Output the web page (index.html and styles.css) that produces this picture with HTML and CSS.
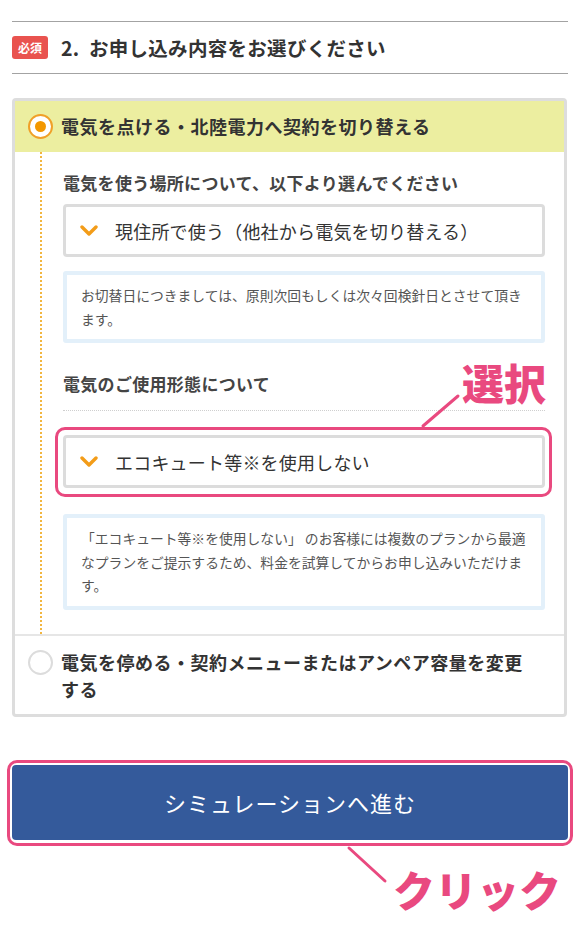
FILE: index.html
```html
<!DOCTYPE html>
<html lang="ja">
<head>
<meta charset="utf-8">
<title>お申し込み内容</title>
<link rel="stylesheet" href="styles.css">
</head>
<body>
<div class="page">
  <div class="sec-head">
    <span class="badge">必須</span>
    <h2 class="sec-title">2.&nbsp; お申し込み内容をお選びください</h2>
  </div>

  <div class="choice-box">
    <div class="opt opt-active">
      <span class="radio radio-on"><span class="radio-dot"></span></span>
      <span class="opt-label">電気を点ける・北陸電力へ契約を切り替える</span>
    </div>
    <div class="opt-body">
      <p class="field-label">電気を使う場所について、以下より選んでください</p>
      <div class="select">
        <svg class="chev" width="18" height="11" viewBox="0 0 18 11"><polyline points="2,2 9,9 16,2" fill="none" stroke="#f39c18" stroke-width="3.4" stroke-linecap="round" stroke-linejoin="round"/></svg>
        <span class="select-text">現住所で使う（他社から電気を切り替える）</span>
      </div>
      <div class="note">お切替日につきましては、原則次回もしくは次々回検針日とさせて頂きます。</div>

      <p class="field-label field-label-sep">電気のご使用形態について</p>
      <div class="highlight">
        <div class="select">
          <svg class="chev" width="18" height="11" viewBox="0 0 18 11"><polyline points="2,2 9,9 16,2" fill="none" stroke="#f39c18" stroke-width="3.4" stroke-linecap="round" stroke-linejoin="round"/></svg>
          <span class="select-text">エコキュート等※を使用しない</span>
        </div>
        <div class="callout callout-select">
          <svg class="leader" width="45" height="40" viewBox="0 0 45 40"><line x1="5" y1="35" x2="40" y2="5" stroke="#e9497f" stroke-width="3" stroke-linecap="round"/></svg>
          <span class="callout-text callout-text-select">選択</span>
        </div>
      </div>
      <div class="note note-2">「エコキュート等※を使用しない」 のお客様には複数のプランから最適なプランをご提示するため、料金を試算してからお申し込みいただけます。</div>
    </div>
    <div class="opt opt-2">
      <span class="radio"></span>
      <span class="opt-label opt-label-2">電気を停める・契約メニューまたはアンペア容量を変更する</span>
    </div>
  </div>

  <div class="btn-wrap">
    <button class="btn-next" type="button">シミュレーションへ進む</button>
    <div class="callout callout-btn">
      <svg class="leader" width="45" height="42" viewBox="0 0 45 42"><line x1="4" y1="4" x2="40" y2="37" stroke="#e9497f" stroke-width="3" stroke-linecap="round"/></svg>
      <span class="callout-text callout-text-btn">クリック</span>
    </div>
  </div>
</div>
</body>
</html>
```

FILE: styles.css
```css
* { box-sizing: border-box; }

html, body {
  margin: 0;
  padding: 0;
  background: #ffffff;
}

body {
  font-family: "Noto Sans CJK JP", "Noto Sans", sans-serif;
  color: #333333;
}

.page {
  width: 580px;
  min-height: 940px;
  padding: 21px 12px 0 12px;
}

/* section heading */
.sec-head {
  display: flex;
  align-items: center;
  gap: 13px;
  height: 53px;
  border-top: 1px solid #a3a3a3;
  border-bottom: 1px solid #a3a3a3;
}

.badge {
  display: flex;
  align-items: center;
  justify-content: center;
  width: 36px;
  height: 23px;
  background: #e9534f;
  color: #ffffff;
  border-radius: 3px;
  font-size: 12px;
  font-weight: 700;
  line-height: 1;
}

.sec-title {
  margin: 0;
  font-size: 19.5px;
  font-weight: 700;
  line-height: 26px;
  color: #333333;
  letter-spacing: 0.3px;
}

/* option box */
.choice-box {
  margin: 24px 1px 0 0;
  border: 3px solid #dddddd;
  border-radius: 4px;
  background: #ffffff;
}

.opt {
  display: flex;
  align-items: flex-start;
  gap: 8px;
  padding: 12px 32px 12px 13px;
}

.opt-active {
  background: #eceea0;
}

.opt-label {
  font-size: 18px;
  font-weight: 700;
  line-height: 27px;
  letter-spacing: 0.5px;
  color: #333333;
}

.radio {
  flex: none;
  display: flex;
  align-items: center;
  justify-content: center;
  width: 25px;
  height: 25px;
  margin-top: 1px;
  border: 2px solid #dcdcdc;
  border-radius: 50%;
  background: #ffffff;
}

.radio-on {
  border: 2.5px solid #f0a028;
}

.radio-dot {
  width: 11px;
  height: 11px;
  border-radius: 50%;
  background: #f39800;
}

.opt-body {
  margin-left: 25px;
  border-left: 2px dotted #f2b640;
  padding: 19px 19px 24px 21px;
}

.field-label {
  margin: 0;
  font-size: 17px;
  font-weight: 700;
  line-height: 24px;
  letter-spacing: 0.3px;
  color: #444444;
}

.field-label-sep {
  margin-top: 29px;
  padding-bottom: 14px;
  border-bottom: 1px dotted #cfcfcf;
}

.select {
  display: flex;
  align-items: center;
  gap: 17px;
  height: 53px;
  margin-top: 9px;
  padding: 0 14px;
  border: 3px solid #dcdcdc;
  border-radius: 4px;
  background: #ffffff;
}

.chev {
  flex: none;
}

.select-text {
  font-size: 18px;
  line-height: 26px;
  color: #333333;
  letter-spacing: 0.2px;
}

.note {
  margin-top: 14px;
  padding: 9px 12px 8px 14px;
  border: 4px solid #e3f0fa;
  border-radius: 3px;
  font-size: 13.8px;
  line-height: 23.5px;
  color: #555555;
}

.note-2 {
  margin-top: 26px;
}

.opt-2 {
  border-top: 2px solid #e6e6e6;
  padding-top: 13px;
  padding-bottom: 11px;
}

/* annotation highlight */
.highlight {
  position: relative;
  margin-top: 24px;
}

.highlight .select {
  margin-top: 0;
}

.highlight::before {
  content: "";
  position: absolute;
  top: -8px;
  left: -8px;
  right: -7px;
  bottom: -9px;
  border: 3px solid #e9497f;
  border-radius: 10px;
  pointer-events: none;
}

.callout {
  position: absolute;
}

.callout-select {
  left: 350px;
  top: -76px;
  width: 140px;
  height: 72px;
}

.callout-select .leader {
  position: absolute;
  left: 5px;
  top: 32px;
}

.callout-text {
  position: absolute;
  font-size: 42px;
  font-weight: 900;
  line-height: 42px;
  color: #e9497f;
  white-space: nowrap;
}

.callout-text-select {
  left: 49px;
  top: 2px;
}

/* button */
.btn-wrap {
  position: relative;
  margin-top: 48px;
}

.btn-wrap::before {
  content: "";
  position: absolute;
  top: -5px;
  left: -5px;
  right: -5px;
  bottom: -6px;
  border: 3px solid #e9497f;
  border-radius: 10px;
  pointer-events: none;
}

.btn-next {
  display: block;
  width: 100%;
  height: 75px;
  border: none;
  border-radius: 4px;
  background: #345a9b;
  color: #ffffff;
  font-family: "Noto Sans CJK JP", "Noto Sans", sans-serif;
  font-size: 22px;
  letter-spacing: 1px;
  line-height: 30px;
}

.callout-btn {
  left: 333px;
  top: 79px;
  width: 230px;
  height: 70px;
}

.callout-btn .leader {
  position: absolute;
  left: 0;
  top: 0;
}

.callout-text-btn {
  left: 48px;
  top: 24px;
}
```
